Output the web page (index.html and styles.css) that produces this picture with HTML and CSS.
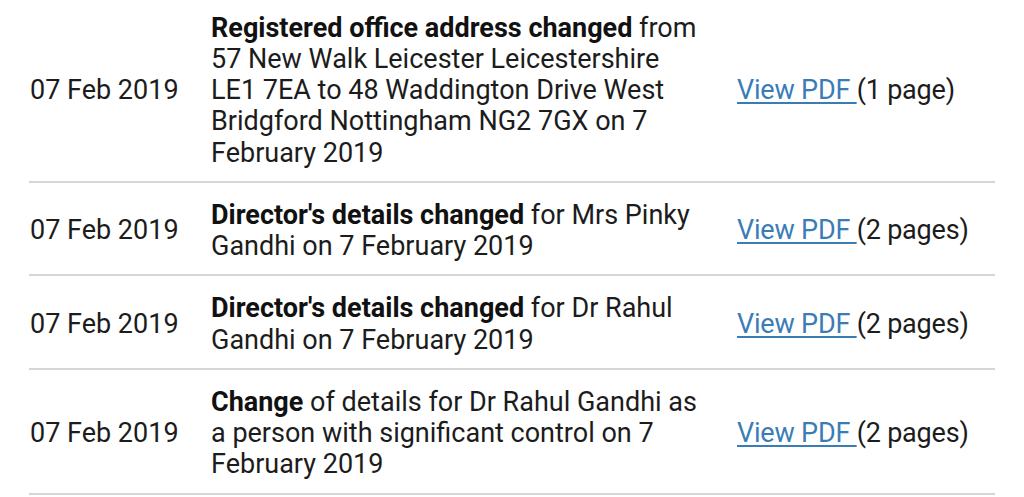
FILE: index.html
```html
<!DOCTYPE html>
<html lang="en">
<head>
<meta charset="utf-8">
<title>Filing history</title>
<link rel="stylesheet" href="styles.css">
</head>
<body>
<div class="filings">
  <div class="row first">
    <div class="date">07 Feb 2019</div>
    <div class="desc"><strong>Registered office address changed</strong> from 57 New Walk Leicester Leicestershire LE1 7EA to 48 Waddington Drive West Bridgford Nottingham NG2 7GX on 7 February 2019</div>
    <div class="doc"><a href="#">View PDF </a>(1 page)</div>
  </div>
  <div class="row">
    <div class="date">07 Feb 2019</div>
    <div class="desc"><strong>Director's details changed</strong> for Mrs Pinky Gandhi on 7 February 2019</div>
    <div class="doc"><a href="#">View PDF </a>(2 pages)</div>
  </div>
  <div class="row">
    <div class="date">07 Feb 2019</div>
    <div class="desc"><strong>Director's details changed</strong> for Dr Rahul Gandhi on 7 February 2019</div>
    <div class="doc"><a href="#">View PDF </a>(2 pages)</div>
  </div>
  <div class="row">
    <div class="date">07 Feb 2019</div>
    <div class="desc"><strong>Change</strong> of details for Dr Rahul Gandhi as a person with significant control on 7 February 2019</div>
    <div class="doc"><a href="#">View PDF </a>(2 pages)</div>
  </div>
</div>
</body>
</html>
```
FILE: styles.css
```css
html, body {
  margin: 0;
  padding: 0;
  background: #ffffff;
}
body {
  font-family: Roboto, "Noto Sans", Arial, sans-serif;
  font-size: 27px;
  line-height: 31.25px;
  color: #1c1c1c;
}
.filings {
  margin: 0 29px;
  width: 966px;
}
.row {
  display: grid;
  grid-template-columns: 182px 526px 1fr;
  align-items: center;
  padding: 17px 0 12px;
  border-bottom: 2px solid #d6d6d6;
}
.row.first {
  padding-top: 12.5px;
}
.date {
  padding-left: 1px;
}
.desc {
  padding-right: 28px;
}
.desc strong {
  font-weight: 700;
  color: #111;
}
.doc {
  letter-spacing: -0.2px;
}
.doc a {
  color: #3a7db6;
  text-decoration: underline;
  text-decoration-thickness: 2px;
  text-underline-offset: 3px;
}
```
